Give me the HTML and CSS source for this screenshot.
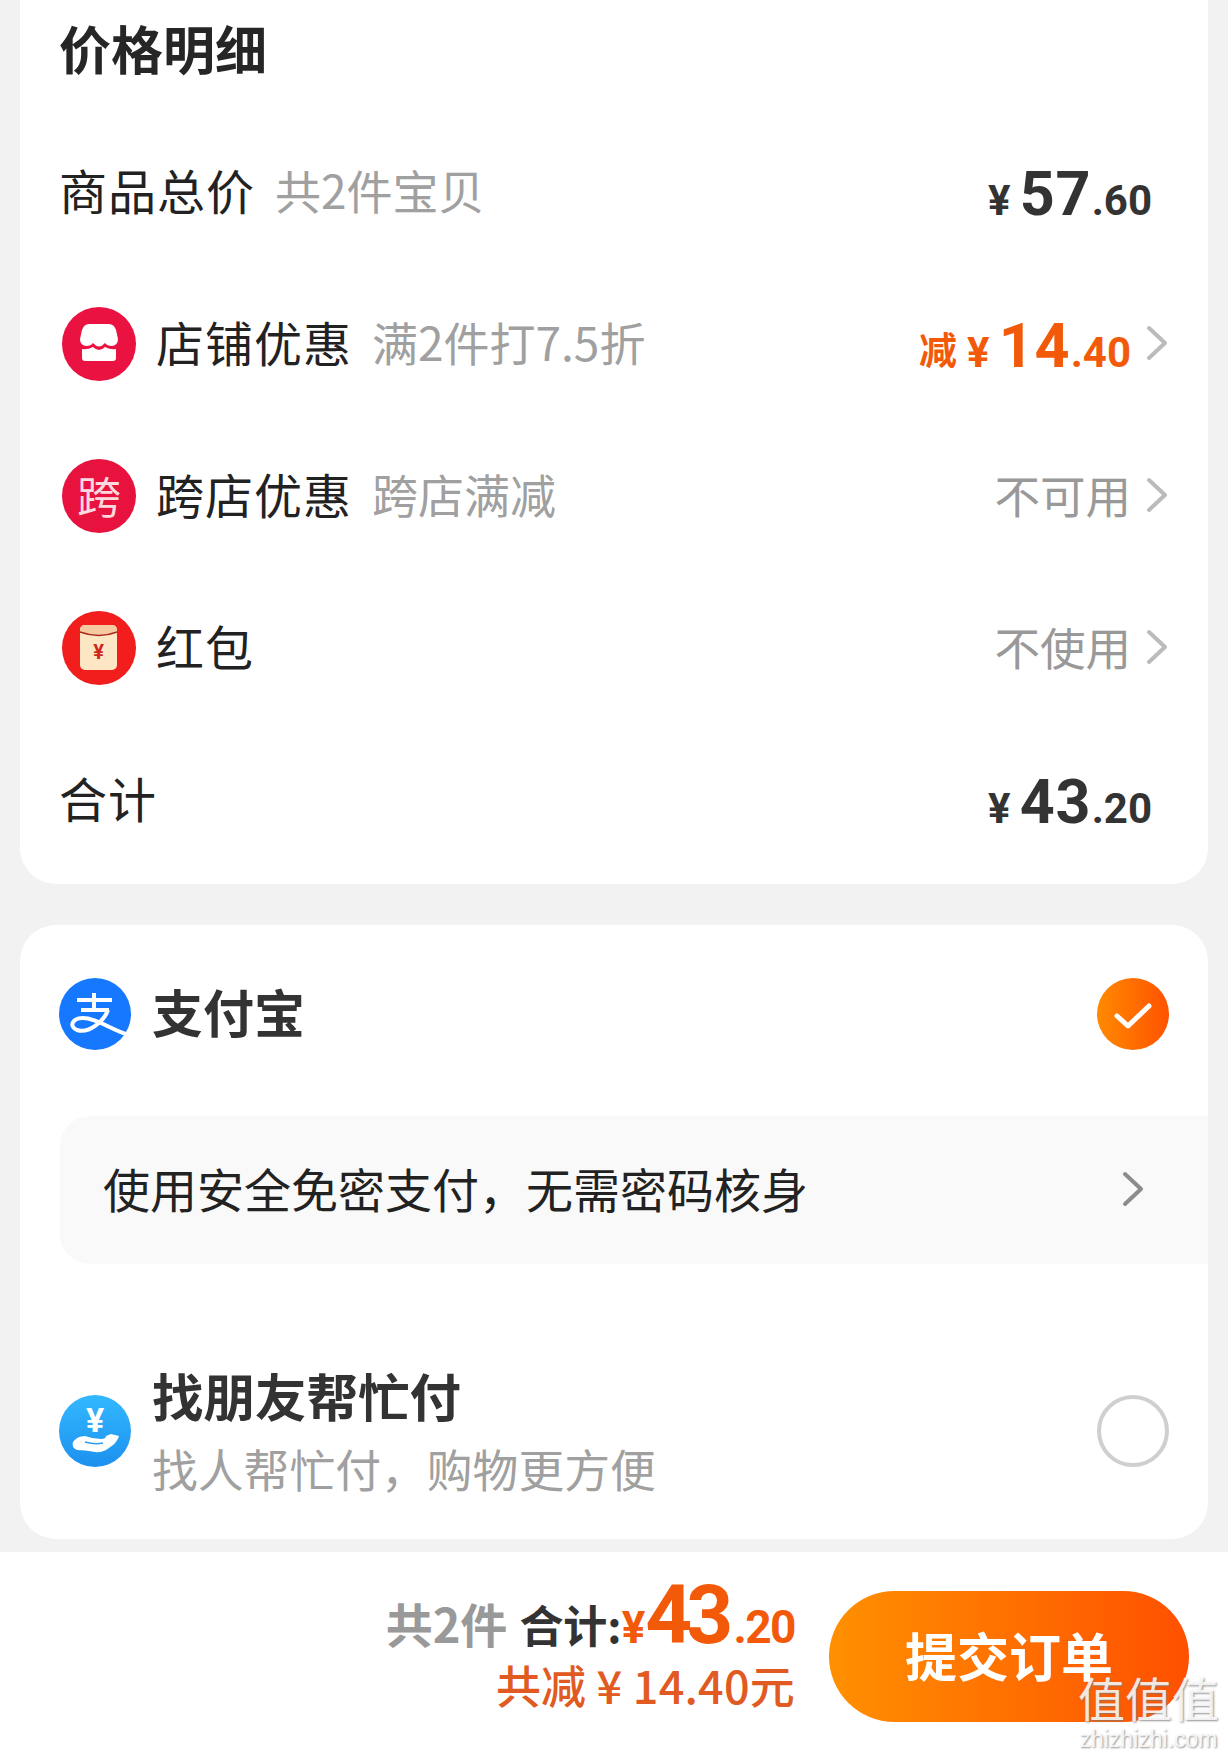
FILE: index.html
```html
<!DOCTYPE html>
<html lang="zh-CN">
<head>
  <meta charset="UTF-8">
  <meta name="viewport" content="width=device-width, initial-scale=1.0">
  <title>价格明细</title>
  <link rel="stylesheet" href="styles.css">
</head>
<body>
  <div class="page">
    <div class="card price-card">
      <h2 class="card-title">价格明细</h2>

      <div class="row row-plain">
        <span class="label">商品总价</span>
        <span class="hint">共2件宝贝</span>
        <span class="price"><span class="yen">¥</span><span class="big">57</span><span class="small">.60</span></span>
      </div>

      <div class="row">
        <svg class="icon" viewBox="0 0 74 74">
          <circle cx="37" cy="37" r="37" fill="#ea1240"/>
          <path fill="#fff" d="M27 17H47Q52 17 54 23L56 32Q56 38 50 39Q45 39 43 36Q40 39.500 37 39.500Q34 39.500 31 36Q29 39 24 39Q18 38 18 32L20 23Q22 17 27 17Z"/>
          <path fill="#fff" d="M20 42Q25 43 31 40Q34 43 37 43Q40 43 43 40Q49 43 54 42V51Q54 54 51 54H23Q20 54 20 51Z"/>
        </svg>
        <span class="label">店铺优惠</span>
        <span class="hint">满2件打7.5折</span>
        <span class="price orange"><span class="minus">减</span><span class="yen">¥</span><span class="big">14</span><span class="small">.40</span></span>
        <svg class="chevron" viewBox="0 0 22 36"><path d="M3 3L19 18L3 33"/></svg>
      </div>

      <div class="row">
        <span class="icon icon-text">跨</span>
        <span class="label">跨店优惠</span>
        <span class="hint">跨店满减</span>
        <span class="value">不可用</span>
        <svg class="chevron" viewBox="0 0 22 36"><path d="M3 3L19 18L3 33"/></svg>
      </div>

      <div class="row">
        <svg class="icon" viewBox="0 0 74 74">
          <circle cx="37" cy="37" r="37" fill="#f21d1d"/>
          <rect x="18" y="14" width="37" height="45" rx="5" fill="#fde6c4"/>
          <path fill="#f7c9a0" d="M18 19Q18 14 23 14H50Q55 14 55 19V21Q37 28 18 21Z"/>
          <path fill="none" stroke="#a8281c" stroke-width="1.500" d="M18 21Q37 28 55 21"/>
          <text x="36.500" y="48" class="envelope-yen">¥</text>
        </svg>
        <span class="label">红包</span>
        <span class="value">不使用</span>
        <svg class="chevron" viewBox="0 0 22 36"><path d="M3 3L19 18L3 33"/></svg>
      </div>

      <div class="row row-plain">
        <span class="label">合计</span>
        <span class="price"><span class="yen">¥</span><span class="big">43</span><span class="small">.20</span></span>
      </div>
    </div>

    <div class="card pay-card">
      <div class="pay-row">
        <svg class="pay-icon" viewBox="0 0 72 72">
          <circle cx="36" cy="36" r="36" fill="#1677ff"/>
          <path fill="none" stroke="#fff" stroke-width="4" d="M18 22H53M35 15V32M22 32H50"/>
          <path fill="none" stroke="#fff" stroke-width="4" d="M49 32C45 43 30 56 18 52C9 48 14 40 24 40C38 40 52 52 70 57"/>
        </svg>
        <span class="pay-name">支付宝</span>
        <span class="radio radio-on">
          <svg viewBox="0 0 72 72"><path d="M20 38L31 48L52 28"/></svg>
        </span>
      </div>

      <div class="secure-box">
        <span class="secure-text">使用安全免密支付，无需密码核身</span>
        <svg class="chevron chevron-dark" viewBox="0 0 22 36"><path d="M3 3L19 18L3 33"/></svg>
      </div>

      <div class="pay-row friend-row">
        <svg class="pay-icon" viewBox="0 0 72 72">
          <defs>
            <linearGradient id="friendBg" x1="0" y1="0" x2="0" y2="1">
              <stop offset="0" stop-color="#33b8ff"/>
              <stop offset="1" stop-color="#1c90ee"/>
            </linearGradient>
          </defs>
          <circle cx="36" cy="36" r="36" fill="url(#friendBg)"/>
          <text x="36" y="37" class="hand-yen">¥</text>
          <path fill="#fff" d="M14 47Q18 41 26 41Q34 44 42 44Q47 44 47 41L52 39L60 41Q58 48 50 53Q44 58 36 57Q26 55 18 55Q12 52 14 47Z"/>
          <path fill="none" stroke="#2a9df2" stroke-width="1.500" d="M26 47Q36 50 44 48"/>
        </svg>
        <div class="friend-text">
          <span class="pay-name">找朋友帮忙付</span>
          <span class="friend-sub">找人帮忙付，购物更方便</span>
        </div>
        <span class="radio radio-off"></span>
      </div>
    </div>

    <div class="footer">
      <div class="summary">
        <div class="summary-top">
          <span class="count">共2件</span>
          <span class="total-label">合计:</span>
          <span class="total"><span class="total-yen">¥</span><span class="total-big">43</span><span class="total-small">.20</span></span>
        </div>
        <div class="summary-off">共减 ¥ 14.40元</div>
      </div>
      <div class="submit">提交订单</div>
    </div>
  </div>

  <div class="watermark">
    <span class="wm-big">值值值</span>
    <span class="wm-small">zhizhizhi.com</span>
  </div>
</body>
</html>
```

FILE: styles.css
```css
* {
  box-sizing: border-box;
}
html, body {
  margin: 0;
  padding: 0;
}
body {
  width: 1228px;
  height: 1761px;
  overflow: hidden;
  position: relative;
  background-color: #f2f2f2;
  color: #222;
  font-family: "Noto Sans CJK SC", "Noto Sans", sans-serif;
}
.page {
  height: 1761px;
  display: flex;
  flex-direction: column;
}
.card {
  margin: 0 20px;
  background-color: #fff;
}

/* price card */
.price-card {
  height: 884px;
  border-radius: 0 0 36px 36px;
}
.card-title {
  height: 96px;
  margin: 0 0 20px;
  padding-left: 39px;
  font-size: 52px;
  line-height: 96px;
  font-weight: 700;
  color: #262626;
}
.row {
  height: 152px;
  padding: 0 40px 0 42px;
  display: flex;
  align-items: center;
}
.row-plain {
  padding: 0 56px 0 39px;
}
.icon {
  width: 74px;
  height: 74px;
  margin-right: 20px;
  flex: none;
}
.icon-text {
  border-radius: 50%;
  background-color: #e8123f;
  color: #fbd9de;
  font-size: 44px;
  line-height: 72px;
  text-align: center;
}
.label {
  font-size: 48px;
  letter-spacing: 1px;
  margin-bottom: 6px;
}
.hint {
  margin: 0 0 6px 20px;
  font-size: 46px;
  color: #a0a0a0;
}
.price {
  margin: 4px 0 0 auto;
  display: flex;
  align-items: baseline;
  font-family: Roboto, sans-serif;
  font-weight: 700;
  color: #333;
}
.price.orange {
  color: #f25a0a;
}
.minus {
  font-family: "Noto Sans CJK SC", sans-serif;
  font-size: 38px;
  margin-right: 10px;
  transform: translateY(-3px);
}
.yen {
  font-size: 42px;
  margin-right: 9px;
}
.big {
  font-size: 61px;
  letter-spacing: 1px;
}
.small {
  font-size: 42px;
}
.value {
  margin: 0 0 5px auto;
  font-size: 45.5px;
  color: #999;
}
.chevron {
  width: 22px;
  height: 36px;
  margin: 0 0 2px 15px;
  flex: none;
}
.chevron path {
  fill: none;
  stroke: #bbb;
  stroke-width: 4;
  stroke-linecap: round;
  stroke-linejoin: round;
}
.chevron-dark path {
  stroke: #8c8c8c;
}
.envelope-yen {
  font-family: Roboto, sans-serif;
  font-size: 20px;
  font-weight: 700;
  fill: #d0281c;
  text-anchor: middle;
}

/* payment card */
.pay-card {
  height: 614px;
  margin-top: 41px;
  border-radius: 36px;
  padding-top: 53px;
}
.pay-row {
  height: 72px;
  padding: 0 39px;
  display: flex;
  align-items: center;
}
.pay-icon {
  width: 72px;
  height: 72px;
  margin-right: 21px;
  flex: none;
}
.pay-name {
  font-size: 51px;
  font-weight: 700;
  color: #333;
  margin-bottom: 6px;
}
.radio {
  width: 72px;
  height: 72px;
  margin-left: auto;
  border-radius: 50%;
  flex: none;
}
.radio-on {
  background: linear-gradient(90deg, #ff8a00, #ff5200);
}
.radio-on svg {
  display: block;
  width: 72px;
  height: 72px;
}
.radio-on path {
  fill: none;
  stroke: #fff;
  stroke-width: 5;
  stroke-linecap: round;
  stroke-linejoin: round;
}
.radio-off {
  border: 4px solid #cfcfcf;
}
.secure-box {
  height: 148px;
  margin: 66px 0 0 40px;
  padding: 0 64px 0 43px;
  border-radius: 30px 0 0 30px;
  background-color: #f9f9f9;
  display: flex;
  align-items: center;
  justify-content: space-between;
  font-size: 47px;
  color: #222;
}
.secure-text {
  margin-bottom: 6px;
}
.friend-row {
  margin-top: 131px;
}
.friend-text {
  display: flex;
  flex-direction: column;
  align-items: flex-start;
  gap: 7px;
  padding-top: 1px;
}
.friend-text .pay-name {
  font-size: 51.5px;
  line-height: 66px;
  margin-bottom: 0;
}
.friend-sub {
  font-size: 45.8px;
  line-height: 66px;
  color: #a0a0a0;
}
.hand-yen {
  font-family: Roboto, sans-serif;
  font-size: 34px;
  font-weight: 700;
  fill: #fff;
  text-anchor: middle;
}

/* bottom bar */
.footer {
  margin-top: 13px;
  flex: 1;
  background-color: #fff;
  display: flex;
  justify-content: flex-end;
  align-items: flex-start;
  padding: 39px 39px 0 0;
}
.summary {
  margin: -12px 34px 0 0;
  display: flex;
  flex-direction: column;
  align-items: flex-end;
}
.summary-top {
  display: flex;
  align-items: baseline;
  height: 72px;
  line-height: 72px;
  font-weight: 700;
  font-size: 44px;
}
.count {
  font-size: 47px;
  color: #999;
  margin-right: 12px;
}
.total-label {
  color: #333;
}
.total {
  font-family: Roboto, sans-serif;
  color: #f25a0a;
}
.total-yen {
  font-size: 44px;
}
.total-big {
  font-size: 82px;
  letter-spacing: -6px;
}
.total-small {
  font-size: 46px;
  letter-spacing: -1.5px;
  margin-left: 6px;
}
.summary-off {
  margin-top: 5px;
  font-size: 45px;
  letter-spacing: 0.2px;
  line-height: 58px;
  font-weight: 500;
  color: #e05a22;
}
.submit {
  width: 360px;
  height: 131px;
  padding-bottom: 4px;
  border-radius: 66px;
  background: linear-gradient(90deg, #ff9000, #ff5000);
  color: #fff;
  font-size: 52px;
  font-weight: 700;
  line-height: 127px;
  text-align: center;
}

/* site watermark over the corner */
.watermark {
  position: absolute;
  right: 8px;
  top: 1667px;
  width: 143px;
  display: flex;
  flex-direction: column;
  align-items: center;
  color: rgba(255, 255, 255, 0.85);
  text-shadow: 1px 1px 2px rgba(120, 120, 120, 0.8);
}
.wm-big {
  font-size: 47px;
  line-height: 60px;
  white-space: nowrap;
}
.wm-small {
  font-family: "Liberation Sans", sans-serif;
  font-size: 23px;
  line-height: 24px;
  white-space: nowrap;
}
```
